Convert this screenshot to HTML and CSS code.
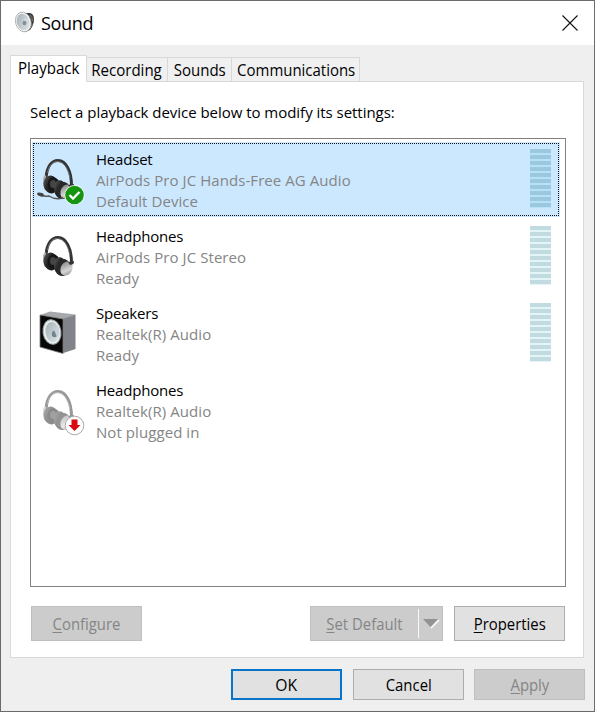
FILE: index.html
```html
<!DOCTYPE html>
<html lang="en">
<head>
<meta charset="utf-8">
<title>Sound</title>
<link rel="stylesheet" href="styles.css">
</head>
<body>
<svg width="0" height="0" class="defs" aria-hidden="true">
  <defs>
    <linearGradient id="cup" x1="0" y1="0" x2="1" y2="1"><stop offset="0" stop-color="#666"/><stop offset=".4" stop-color="#242424"/><stop offset="1" stop-color="#111"/></linearGradient>
    <linearGradient id="silver" x1="0" y1="0" x2="1" y2="1"><stop offset="0" stop-color="#777"/><stop offset=".6" stop-color="#d5d5d5"/><stop offset="1" stop-color="#888"/></linearGradient>
    <linearGradient id="cone" x1="0" y1="0" x2="1" y2="1"><stop offset="0" stop-color="#a3afb4"/><stop offset="1" stop-color="#e1e8ea"/></linearGradient>
    <g id="phones">
      <path d="M6 21C7 9 12 3.500 18 3.500C26 3.500 31.500 14 31.500 29" fill="none" stroke="#333" stroke-width="3"/>
      <path d="M7.500 16C9 8 13 4 18 4.500C24 5 28 12 30 21" fill="none" stroke="#888" stroke-width=".7"/>
      <path d="M3 21L6 18L7 34L4 32Z" fill="#aaa"/>
      <ellipse cx="11" cy="27.500" rx="7.500" ry="9" transform="rotate(-12 11 27.500)" fill="url(#cup)"/>
      <ellipse cx="13.500" cy="27.500" rx="6" ry="7" fill="#171717"/>
      <ellipse cx="13" cy="27" rx="3" ry="4" fill="#444"/>
      <ellipse cx="20.500" cy="32.500" rx="6.500" ry="9.300" transform="rotate(-10 20.500 32.500)" fill="url(#cup)"/>
      <ellipse cx="23.500" cy="33.500" rx="6.500" ry="8.500" transform="rotate(12 23.500 33.500)" fill="#292929"/>
      <ellipse cx="26.500" cy="34.500" rx="5.800" ry="7.300" transform="rotate(28 26.500 34.500)" fill="url(#silver)"/>
      <path d="M28 28L34 27L33.500 30L30 31Z" fill="#333"/>
    </g>
  </defs>
</svg>
<main class="window">
  <header class="titlebar">
    <svg class="app-icon" viewBox="0 0 20 22">
      <path d="M9 2L15 2Q19 3 19 8Q19 14 15 19L10 21Z" fill="#3d4041"/>
      <path d="M15 4Q17.500 6 17.500 10M15 17L17.500 13" stroke="#777" fill="none"/>
      <ellipse cx="8.300" cy="11" rx="7.700" ry="10" transform="rotate(-16 8.300 11)" fill="#fafafa" stroke="#999" stroke-width=".7"/>
      <ellipse cx="8.100" cy="11" rx="6.300" ry="8.500" transform="rotate(-16 8.100 11)" fill="url(#cone)"/>
      <path d="M9 8L13 6L12.500 14L8 13Z" fill="#d2dadd"/>
      <ellipse cx="9.500" cy="12" rx="2" ry="2.300" fill="#849297"/>
    </svg>
    <h1>Sound</h1>
    <svg class="close" viewBox="0 0 16 16"><path d="M.5.5L15.500 15.500M15.500.5L.5 15.500" stroke="#111" stroke-width="1.100"/></svg>
  </header>
  <nav class="tabs">
    <div class="tab active"><span class="t-playback">Playback</span></div>
    <div class="tab recording"><span class="t-recording">Recording</span></div>
    <div class="tab sounds"><span class="t-sounds">Sounds</span></div>
    <div class="tab communications"><span class="t-communications">Communications</span></div>
  </nav>
  <section class="panel">
    <p class="prompt">Select a playback device below to modify its settings:</p>
    <div class="devices">
      <article class="device selected">
        <svg class="icon" viewBox="0 0 48 50"><use href="#phones" x="3" y="1"/><path d="M1 38Q6 41 12 40Q18 44 26 42" fill="none" stroke="#555" stroke-width="1.500"/><ellipse cx="3.500" cy="38.500" rx="3.500" ry="1.800" transform="rotate(12 3.500 38.500)" fill="#444"/><circle cx="37.500" cy="39" r="10" fill="#fff"/><circle cx="37.500" cy="39" r="9.300" fill="#169510"/><path d="M32.500 39L36 42.500L42.500 36" fill="none" stroke="#fff" stroke-width="2.300"/></svg>
        <div class="info"><h2>Headset</h2><p>AirPods Pro JC Hands-Free AG Audio</p><p>Default Device</p></div>
        <div class="meter"></div>
      </article>
      <article class="device">
        <svg class="icon" viewBox="0 0 48 50"><use href="#phones" x="3" y="1"/></svg>
        <div class="info"><h2>Headphones</h2><p>AirPods Pro JC Stereo</p><p>Ready</p></div>
        <div class="meter"></div>
      </article>
      <article class="device">
        <svg class="icon" viewBox="0 0 48 50"><path d="M3 5L13 1.500L38.500 4.500L26 9Z" fill="#a6a9ac"/><path d="M25 9L38.500 4.500V39L25 43.500Z" fill="#80848a"/><path d="M3 5L26 9V43.500L3 37Z" fill="#080808" stroke="#777" stroke-width=".8"/><ellipse cx="15" cy="22" rx="9" ry="12.300" transform="rotate(-8 15 22)" fill="#e9eeee" stroke="#98a0a2"/><ellipse cx="15.500" cy="22" rx="7" ry="10" transform="rotate(-8 15.500 22)" fill="url(#cone)"/><ellipse cx="17.500" cy="24" rx="2.700" ry="3.300" fill="#71868f"/><path d="M17.500 21L22 18V25L19.500 26Z" fill="#c6d2d6"/></svg>
        <div class="info"><h2>Speakers</h2><p>Realtek(R) Audio</p><p>Ready</p></div>
        <div class="meter"></div>
      </article>
      <article class="device">
        <svg class="icon" viewBox="0 0 48 50"><g opacity=".5"><use href="#phones" x="3" y="1"/></g><circle cx="37.500" cy="38.500" r="9.300" fill="#fff" stroke="#aaa"/><path d="M34.500 32.500H40.500V38H43.500L37.500 44L31.500 38H34.500Z" fill="#d90714"/></svg>
        <div class="info"><h2>Headphones</h2><p>Realtek(R) Audio</p><p>Not plugged in</p></div>
      </article>
    </div>
    <div class="actions">
      <button class="disabled" disabled><span><u>C</u>onfigure</span></button>
      <button class="disabled split" disabled><span class="split-label"><u>S</u>et Default</span><span class="arrow"><svg viewBox="0 0 18 10"><path d="M9 9L17 1" fill="none" stroke="#fff" stroke-width="1.500"/><path d="M1 0H16L8.500 8Z" fill="#929292"/></svg></span></button>
      <button><span><u>P</u>roperties</span></button>
    </div>
  </section>
  <footer class="footer">
    <button class="primary"><span class="t-ok">OK</span></button>
    <button><span>Cancel</span></button>
    <button class="disabled" disabled><span><u>A</u>pply</span></button>
  </footer>
</main>
</body>
</html>
```
FILE: styles.css
```css
* { box-sizing: border-box; }
body { margin: 0; font-family: "Open Sans", "Noto Sans", sans-serif; font-size: 15px; color: #000; }
h1, h2, p { margin: 0; font-weight: 400; }
.defs { position: absolute; }
.window { width: 595px; height: 712px; border: 1px solid #6b6b6b; background: #efefef; display: flex; flex-direction: column; overflow: hidden; }
.titlebar { height: 44px; flex: none; background: #fff; display: flex; align-items: center; padding: 0 16px 0 14px; }
.app-icon { width: 20px; height: 22px; margin-top: -2px; }
h1 { font-size: 18px; line-height: 24px; margin-left: 6px; letter-spacing: -.35px; }
.close { width: 16px; height: 16px; margin-left: auto; margin-top: -1px; }
.tabs { height: 36px; flex: none; display: flex; align-items: flex-end; padding-left: 9px; }
.tab { height: 24px; border: solid #d9d9d9; border-width: 1px 1px 0 0; display: flex; align-items: center; justify-content: center; font-size: 16px; white-space: nowrap; background: #f0f0f0; }
.tab span, button span { display: inline-block; }
.active { width: 77px; height: 27px; border-left-width: 1px; background: #fff; position: relative; margin-bottom: -1px; padding-bottom: 2px; z-index: 1; }
.recording { width: 81px; }
.sounds { width: 64px; }
.communications { width: 128px; }
.tab span { transform: scaleX(.94); }
.tab .t-communications { transform: translateX(1px) scaleX(.935); }
.panel { width: 574px; height: 577px; flex: none; margin-left: 9px; border: 1px solid #d9d9d9; background: #fff; padding: 19px 17px 0 19px; }
.prompt { height: 22px; line-height: 22px; white-space: nowrap; letter-spacing: -.03px; }
.devices { width: 536px; height: 449px; margin-top: 15px; border: 1px solid #828282; padding: 3px 5px 0 1px; }
.device { height: 75px; margin-bottom: 2px; display: flex; padding: 7px 9px 0 7px; }
.selected { background: #cce8ff; outline: 1px dotted #111; outline-offset: -2px; }
.icon { width: 48px; height: 50px; flex: none; margin: 7px 0 0 -2px; }
.info { margin-left: 11px; line-height: 21px; white-space: nowrap; flex: 1; }
h2 { font-size: 15px; line-height: 21px; letter-spacing: -.2px; }
.info p { color: #858585; letter-spacing: .07px; }
.meter { width: 21px; height: 59px; background: repeating-linear-gradient(#c2dbe1 0 4px, #e4f5f8 4px 6px); }
.selected .meter { background: repeating-linear-gradient(#9bc8df 0 4px, #b7e1f7 4px 6px); }
.actions { display: flex; margin-top: 19px; padding-left: 1px; }
button { width: 111px; height: 35px; padding: 0; border: 1px solid #adadad; background: #e1e1e1; color: #000; font: 16px "Open Sans", "Noto Sans", sans-serif; display: flex; align-items: center; justify-content: center; white-space: nowrap; }
button span { transform: scaleX(.93); }
u { text-decoration-thickness: 1px; text-underline-offset: 2px; }
.disabled { background: #ccc; border-color: #bfbfbf; color: #858585; }
.split { width: 133px; margin-left: 168px; margin-right: 11px; }
.split .split-label { width: 107px; text-align: center; }
.split .arrow { height: 29px; flex: 1; border-left: 1px solid #f8f8f8; display: flex; align-items: center; justify-content: center; transform: none; }
.arrow svg { width: 18px; height: 10px; }
.footer { display: flex; justify-content: flex-end; gap: 11px; padding: 11px 9px 0 0; }
.footer button { height: 31px; }
.footer .disabled { margin-left: -1px; }
.footer .primary { border: 2px solid #0875c8; }
.primary .t-ok { transform: scaleX(.98); }
```
